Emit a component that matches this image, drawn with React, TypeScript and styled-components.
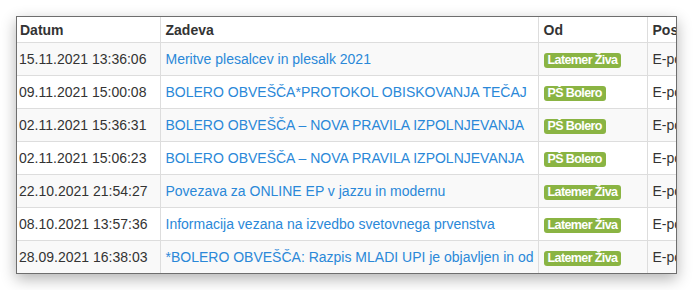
import styled, { createGlobalStyle } from "styled-components";

const GlobalStyle = createGlobalStyle`
  body {
    margin: 0;
    background: #fff;
    font-family: "Liberation Sans", Arial, sans-serif;
  }
`;

interface Message {
  date: string;
  subject: string;
  from: string;
  channel: string;
}

const messages: Message[] = [
  { date: "15.11.2021 13:36:06", subject: "Meritve plesalcev in plesalk 2021", from: "Latemer Živa", channel: "E-pošta" },
  { date: "09.11.2021 15:00:08", subject: "BOLERO OBVEŠČA*PROTOKOL OBISKOVANJA TEČAJ", from: "PŠ Bolero", channel: "E-pošta" },
  { date: "02.11.2021 15:36:31", subject: "BOLERO OBVEŠČA – NOVA PRAVILA IZPOLNJEVANJA", from: "PŠ Bolero", channel: "E-pošta" },
  { date: "02.11.2021 15:06:23", subject: "BOLERO OBVEŠČA – NOVA PRAVILA IZPOLNJEVANJA", from: "PŠ Bolero", channel: "E-pošta" },
  { date: "22.10.2021 21:54:27", subject: "Povezava za ONLINE EP v jazzu in modernu", from: "Latemer Živa", channel: "E-pošta" },
  { date: "08.10.2021 13:57:36", subject: "Informacija vezana na izvedbo svetovnega prvenstva", from: "Latemer Živa", channel: "E-pošta" },
  { date: "28.09.2021 16:38:03", subject: "*BOLERO OBVEŠČA: Razpis MLADI UPI je objavljen in od", from: "Latemer Živa", channel: "E-pošta" },
];

const App = () => {
  return (
    <>
      <GlobalStyle />
      <Panel>
        <Table>
          <colgroup>
            <col style={{ width: 143 }} />
            <col style={{ width: 378 }} />
            <col style={{ width: 109 }} />
            <col style={{ width: 120 }} />
          </colgroup>
          <thead>
            <tr>
              <HeadCell $first>Datum</HeadCell>
              <HeadCell>Zadeva</HeadCell>
              <HeadCell>Od</HeadCell>
              <HeadCell>Posiljanje</HeadCell>
            </tr>
          </thead>
          <tbody>
            {messages.map((m, i) => (
              <Row key={i} $striped={i % 2 === 0}>
                <Cell $first>{m.date}</Cell>
                <Cell>
                  <SubjectLink href="#">{m.subject}</SubjectLink>
                </Cell>
                <Cell>
                  <Label>{m.from}</Label>
                </Cell>
                <Cell>{m.channel}</Cell>
              </Row>
            ))}
          </tbody>
        </Table>
      </Panel>
    </>
  );
};

const Panel = styled.div`
  margin: 16px;
  width: 659px;
  border: 1px solid #6e6e6e;
  overflow: hidden;
  background: #fff;
  box-shadow: 0 5px 14px rgba(0, 0, 0, 0.3);
`;

const Table = styled.table`
  width: 750px;
  table-layout: fixed;
  border-collapse: collapse;
  font-size: 14px;
  color: #333;
`;

const HeadCell = styled.th<{ $first?: boolean }>`
  text-align: left;
  font-weight: 700;
  height: 25px;
  padding: 0 5px 0 ${({ $first }) => ($first ? "3px" : "5px")};
  line-height: 20px;
  border-left: ${({ $first }) => ($first ? "none" : "1px solid #ddd")};
  border-bottom: 1px solid #ddd;
  white-space: nowrap;
  overflow: hidden;
`;

const Row = styled.tr<{ $striped: boolean }>`
  background: ${({ $striped }) => ($striped ? "#f9f9f9" : "#fff")};
`;

const Cell = styled.td<{ $first?: boolean }>`
  height: 32px;
  padding: 0 5px 0 ${({ $first }) => ($first ? "2px" : "5px")};
  line-height: 20px;
  border-left: ${({ $first }) => ($first ? "none" : "1px solid #ddd")};
  border-top: 1px solid #ddd;
  white-space: nowrap;
  overflow: hidden;
  vertical-align: middle;
`;

const SubjectLink = styled.a`
  color: #2a88d8;
  text-decoration: none;
`;

const Label = styled.span`
  display: inline-block;
  background: #8ab443;
  color: #fff;
  font-size: 12.5px;
  font-weight: 700;
  line-height: 15px;
  padding: 0 4px;
  border-radius: 3px;
  letter-spacing: -0.6px;
  vertical-align: middle;
`;

export default App;
